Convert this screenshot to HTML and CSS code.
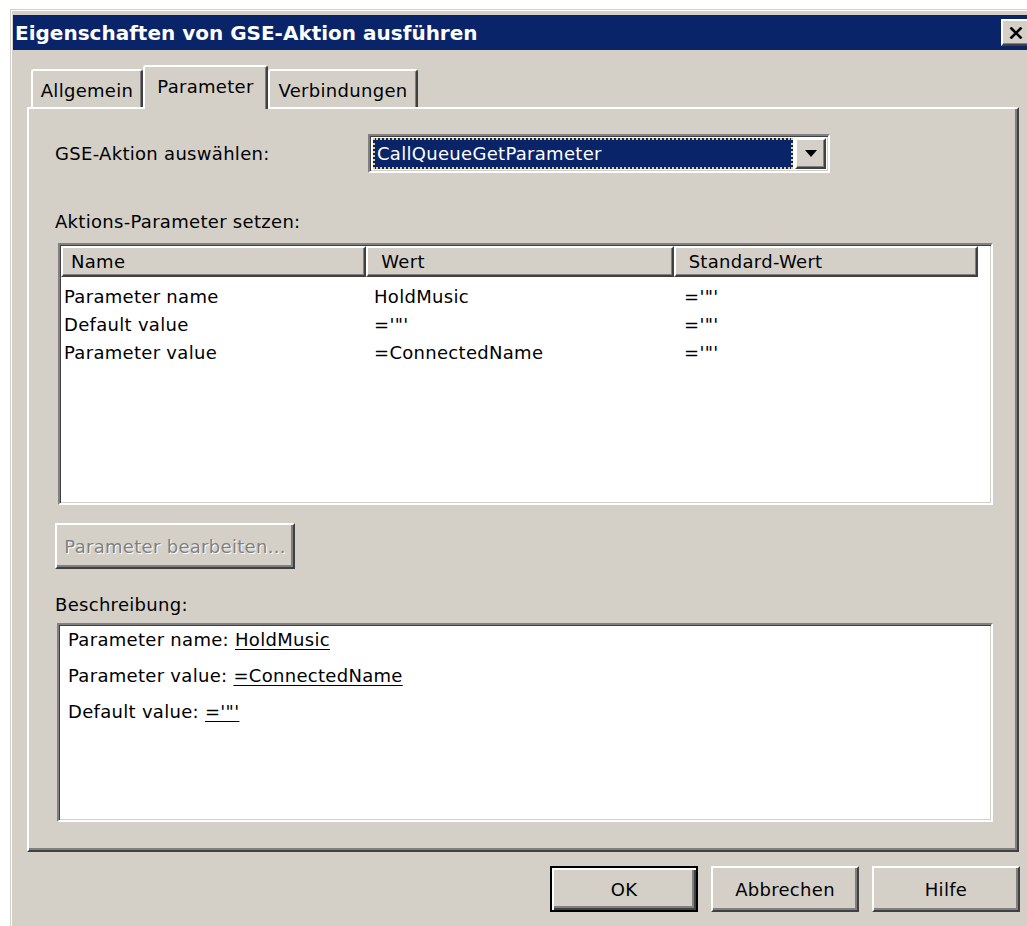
FILE: index.html
```html
<!DOCTYPE html>
<html lang="de">
<head>
<meta charset="utf-8">
<title>Eigenschaften von GSE-Aktion ausführen</title>
<link rel="stylesheet" href="styles.css">
</head>
<body>
<div class="window">
  <div class="titlebar">
    <span class="title">Eigenschaften von GSE-Aktion ausführen</span>
    <button class="close" type="button" aria-label="Schließen">
      <svg width="14" height="12" viewBox="0 0 14 12"><path d="M1.5 0.5 L12.5 11.5 M12.5 0.5 L1.5 11.5" stroke="#000" stroke-width="2.6" fill="none"/></svg>
    </button>
  </div>

  <div class="dialog-body">
    <div class="tabs">
      <div class="tab first">Allgemein</div>
      <div class="tab active">Parameter</div>
      <div class="tab last">Verbindungen</div>
    </div>

    <div class="panel">
      <div class="select-row">
        <span class="field-label">GSE-Aktion auswählen:</span>
        <div class="combo">
          <div class="combo-value"><span>CallQueueGetParameter</span></div>
          <div class="combo-arrow">
            <svg width="12" height="7" viewBox="0 0 12 7"><path d="M0 0 H12 L6 7 Z" fill="#000"/></svg>
          </div>
        </div>
      </div>

      <div class="section-label">Aktions-Parameter setzen:</div>
      <div class="listview">
        <div class="lv-header">
          <div class="lv-col c1">Name</div>
          <div class="lv-col c2">Wert</div>
          <div class="lv-col c3">Standard-Wert</div>
          <div class="lv-fill"></div>
        </div>
        <div class="lv-rows">
          <div class="lv-row"><span class="c1">Parameter name</span><span class="c2">HoldMusic</span><span class="c3">='"'</span></div>
          <div class="lv-row"><span class="c1">Default value</span><span class="c2">='"'</span><span class="c3">='"'</span></div>
          <div class="lv-row"><span class="c1">Parameter value</span><span class="c2">=ConnectedName</span><span class="c3">='"'</span></div>
        </div>
      </div>

      <button class="btn edit-btn" type="button" disabled>Parameter bearbeiten...</button>

      <div class="section-label desc-label">Beschreibung:</div>
      <div class="description">
        <div class="desc-line">Parameter name: <u>HoldMusic</u></div>
        <div class="desc-line">Parameter value: <u>=ConnectedName</u></div>
        <div class="desc-line">Default value: <u>='"'</u></div>
      </div>
    </div>

    <div class="actions">
      <button class="btn default" type="button">OK</button>
      <button class="btn" type="button">Abbrechen</button>
      <button class="btn" type="button">Hilfe</button>
    </div>
  </div>
</div>
</body>
</html>
```

FILE: styles.css
```css
* {
  box-sizing: border-box;
}

html,
body {
  margin: 0;
}

body {
  background: #ffffff;
  font-family: "DejaVu Sans", "Noto Sans", sans-serif;
  font-size: 18px;
  letter-spacing: 0.3px;
  color: #000;
  padding: 9px 0 0 10px;
  height: 926px;
  overflow: hidden;
}

button {
  font: inherit;
  letter-spacing: inherit;
  color: inherit;
  margin: 0;
  padding: 0;
}

/* ---------- window frame ---------- */
.window {
  width: 1026px;
  height: 940px;
  background: #d4d0c8;
  border: 1px solid #d4d0c8;
  box-shadow: inset 1px 1px 0 #ffffff;
  padding: 5px 2px 0 2px;
}

.titlebar {
  height: 35px;
  background: #0a246a;
  display: flex;
  align-items: center;
  justify-content: space-between;
  padding: 0 2px 0 2px;
}

.title {
  color: #fff;
  font-weight: bold;
  font-size: 20px;
  letter-spacing: 0;
  white-space: nowrap;
}

.close {
  flex-shrink: 0;
  width: 30px;
  height: 27px;
  background: #d4d0c8;
  border: 2px solid;
  border-color: #fff #404040 #404040 #fff;
  box-shadow: inset -1px -1px 0 #808080;
  display: flex;
  align-items: center;
  justify-content: center;
}

.close svg {
  display: block;
}

.dialog-body {
  padding: 15px 14px 0 14px;
}

/* ---------- tabs ---------- */
.tabs {
  position: relative;
  z-index: 1;
  display: flex;
  align-items: flex-end;
  height: 44px;
  margin-bottom: -2px;
  padding-left: 4px;
}

.tab {
  height: 38px;
  margin-bottom: 2px;
  background: #d4d0c8;
  border-top: 2px solid #fff;
  border-left: 2px solid #fff;
  border-right: 2px solid #404040;
  box-shadow: inset -1px 0 0 #808080;
  border-radius: 3px 3px 0 0;
  display: flex;
  align-items: center;
  justify-content: center;
  padding-top: 2px;
  white-space: nowrap;
}

.tab.first {
  width: 112px;
}

.tab.active {
  width: 125px;
  height: 44px;
  margin-bottom: 0;
  padding-top: 0;
  padding-bottom: 4px;
}

.tab.last {
  width: 150px;
}

/* ---------- tab page ---------- */
.panel {
  height: 745px;
  border: 2px solid;
  border-color: #fff #404040 #404040 #fff;
  box-shadow: inset -2px -2px 0 #808080;
  padding: 25px 24px 0 26px;
  display: flex;
  flex-direction: column;
  align-items: flex-start;
}

.select-row {
  display: flex;
  align-items: center;
  height: 39px;
}

.field-label {
  width: 313px;
  white-space: nowrap;
}

.combo {
  width: 462px;
  height: 39px;
  background: #fff;
  border: 2px solid;
  border-color: #808080 #fff #fff #808080;
  box-shadow: inset 1px 1px 0 #404040, inset -1px -1px 0 #d4d0c8;
  padding: 2px 2px 2px 3px;
  display: flex;
  gap: 2px;
}

.combo-value {
  flex: 1;
  background: #0a246a;
  color: #fff;
  outline: 2px dotted #e6d27a;
  outline-offset: -2px;
  display: flex;
  align-items: center;
  padding-left: 4px;
  white-space: nowrap;
}

.combo-arrow {
  width: 31px;
  background: #d4d0c8;
  border: 2px solid;
  border-color: #fff #404040 #404040 #fff;
  box-shadow: inset -1px -1px 0 #808080;
  display: flex;
  align-items: center;
  justify-content: center;
}

.combo-arrow svg {
  display: block;
}

.section-label {
  height: 22px;
  line-height: 22px;
  margin-top: 38px;
  white-space: nowrap;
}

/* ---------- list view ---------- */
.listview {
  margin-top: 10px;
  margin-left: 3px;
  width: 935px;
  height: 262px;
  background: #fff;
  border: 2px solid;
  border-color: #808080 #fff #fff #808080;
  box-shadow: inset 1px 1px 0 #404040, inset -1px -1px 0 #d4d0c8;
  padding: 1px;
}

.lv-header {
  display: flex;
  height: 31px;
}

.lv-col,
.lv-fill {
  background: #d4d0c8;
  border: 2px solid;
  border-color: #fff #404040 #404040 #fff;
  box-shadow: inset -1px -1px 0 #808080;
  display: flex;
  align-items: center;
  padding-left: 8px;
  white-space: nowrap;
}

.lv-col.c1 {
  width: 307px;
}

.lv-col.c2 {
  width: 309px;
  padding-left: 13px;
}

.lv-col.c3 {
  width: 306px;
  padding-left: 13px;
}

.lv-fill {
  flex: 1;
  background: #fff;
  border-color: #fff;
  box-shadow: none;
}

.lv-rows {
  padding-top: 6px;
}

.lv-row {
  display: flex;
  height: 28px;
  line-height: 28px;
  white-space: nowrap;
}

.lv-row .c1 {
  width: 307px;
  padding-left: 3px;
}

.lv-row .c2 {
  width: 309px;
  padding-left: 6px;
}

.lv-row .c3 {
  padding-left: 7px;
}

/* ---------- buttons ---------- */
.btn {
  flex-shrink: 0;
  width: 148px;
  height: 46px;
  background: #d4d0c8;
  border: 2px solid;
  border-color: #fff #404040 #404040 #fff;
  box-shadow: inset -2px -2px 0 #808080;
  display: flex;
  align-items: center;
  justify-content: center;
  white-space: nowrap;
}

.btn.default {
  border-color: #000;
  box-shadow: inset 2px 2px 0 #fff, inset -2px -2px 0 #404040, inset -4px -4px 0 #808080;
}

.edit-btn {
  width: 240px;
  margin-top: 18px;
  color: #808080;
  text-shadow: 1px 1px 0 #fff;
}

.desc-label {
  margin-top: 25px;
}

/* ---------- description ---------- */
.description {
  margin-top: 7px;
  margin-left: 2px;
  width: 936px;
  height: 199px;
  background: #fff;
  border: 2px solid;
  border-color: #808080 #fff #fff #808080;
  box-shadow: inset 1px 1px 0 #404040, inset -1px -1px 0 #d4d0c8;
  padding: 0 0 0 9px;
}

.desc-line {
  height: 36px;
  line-height: 30px;
  white-space: nowrap;
}

.desc-line u {
  text-underline-offset: 3px;
}

/* ---------- dialog buttons ---------- */
.actions {
  display: flex;
  justify-content: flex-end;
  gap: 13px;
  margin-top: 14px;
  margin-right: -1px;
}
```
